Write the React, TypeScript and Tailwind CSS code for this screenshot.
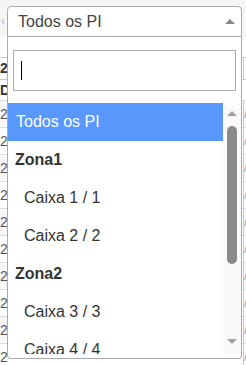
const font = { fontFamily: '"Liberation Sans", Arial, sans-serif' };

const rows = Array.from({ length: 10 });

function Background() {
  return (
    <div className="absolute inset-0 bg-white text-[14px] text-[#555]" style={font}>
      <div className="h-[37px] bg-[#f5f5f5] pl-[1px] pt-[12px] text-[12px] text-[#9cc3ea]">‹</div>
      <div className="h-[20px]" />
      <div className="flex h-[23px] items-center border-y border-[#ccc] font-bold text-[#333]">
        <span className="w-[8px] overflow-hidden">2</span>
        <span className="flex-1" />
        <span className="h-full w-[3px] border-l border-[#ccc]" />
      </div>
      <div className="flex h-[20px] items-center font-bold text-[#333]">
        <span className="w-[8px] overflow-hidden">D</span>
      </div>
      {rows.map((_, i) => (
        <div
          key={i}
          className={
            "flex h-[27px] items-center border-t border-[#ddd] " +
            (i % 2 === 0 ? "bg-[#f7f7f7]" : "bg-white")
          }
        >
          <span className="w-[8px] overflow-hidden">2</span>
          <span className="flex-1" />
          <span className="flex h-full w-[3px] items-center border-l border-[#ccc] text-[11px] text-[#999]">/</span>
        </div>
      ))}
    </div>
  );
}

const items = [
  { label: "Todos os PI", kind: "active" },
  { label: "Zona1", kind: "group" },
  { label: "Caixa 1 / 1", kind: "item" },
  { label: "Caixa 2 / 2", kind: "item" },
  { label: "Zona2", kind: "group" },
  { label: "Caixa 3 / 3", kind: "item" },
  { label: "Caixa 4 / 4", kind: "item" },
];

function Dropdown() {
  return (
    <div className="absolute left-[7px] top-[6px] w-[235px] text-[16px] text-[#333]" style={font}>
      <div className="flex h-[31px] items-center justify-between rounded-t-[4px] border border-[#aaa] bg-white pl-[10px] pr-[6px] text-[#444]">
        <span>Todos os PI</span>
        <span className="h-0 w-0 border-x-[5px] border-b-[5px] border-x-transparent border-b-[#888]" />
      </div>
      <div className="rounded-b-[4px] border border-t-0 border-[#aaa] bg-white pb-[4px]">
        <div className="px-[5px] pb-[12px] pt-[13px]">
          <div className="flex h-[41px] items-center border border-[#aaa] pl-[7px]">
            <span className="h-[19px] w-[1px] bg-black" />
          </div>
        </div>
        <div className="flex h-[251px] overflow-hidden">
          <div className="flex-1">
            {items.map((it) => (
              <div
                key={it.label}
                className={
                  "flex h-[38px] items-center " +
                  (it.kind === "active"
                    ? "bg-[#5897fb] pl-[8px] text-white"
                    : it.kind === "group"
                      ? "pl-[7px] font-bold"
                      : "pl-[16px]")
                }
              >
                {it.label}
              </div>
            ))}
          </div>
          <div className="flex w-[18px] flex-col items-center bg-[#fafafa] pt-[8px]">
            <span className="h-0 w-0 border-x-[5px] border-b-[5px] border-x-transparent border-b-[#a3a3a3]" />
            <span className="mt-[10px] h-[138px] w-[10px] rounded-full bg-[#8a8a8a]" />
            <span className="flex-1" />
            <span className="mb-[10px] h-0 w-0 border-x-[5px] border-t-[5px] border-x-transparent border-t-[#a3a3a3]" />
          </div>
        </div>
      </div>
    </div>
  );
}

export default function App() {
  return (
    <div className="relative h-[365px] w-[246px] overflow-hidden">
      <Background />
      <Dropdown />
    </div>
  );
}
